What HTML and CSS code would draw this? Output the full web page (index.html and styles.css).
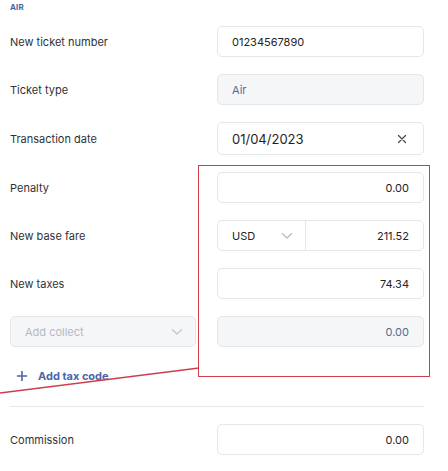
FILE: index.html
```html
<!DOCTYPE html>
<html>
<head>
<meta charset="utf-8">
<link rel="stylesheet" href="styles.css">
</head>
<body>
<div class="page">
  <div class="section-title">AIR</div>
  <div class="form">
    <div class="row">
      <div class="label">New ticket number</div>
      <div class="field"><span class="val">01234567890</span></div>
    </div>
    <div class="row">
      <div class="label">Ticket type</div>
      <div class="field disabled"><span class="val muted">Air</span></div>
    </div>
    <div class="row">
      <div class="label">Transaction date</div>
      <div class="field date"><span class="val big">01/04/2023</span>
        <svg class="clear" width="10" height="10" viewBox="0 0 10 10"><path d="M1.5 1.5 L8.5 8.5 M8.5 1.5 L1.5 8.5" stroke="#45474d" stroke-width="1.2" stroke-linecap="round"/></svg>
      </div>
    </div>
    <div class="row">
      <div class="label">Penalty</div>
      <div class="field right"><span class="val">0.00</span></div>
    </div>
    <div class="row">
      <div class="label">New base fare</div>
      <div class="field group">
        <div class="cur"><span class="val">USD</span>
          <svg class="chev" width="12" height="8" viewBox="0 0 12 8"><path d="M1.5 1.8 L6 6 L10.5 1.8" fill="none" stroke="#b9bdc6" stroke-width="1.4" stroke-linecap="round" stroke-linejoin="round"/></svg>
        </div>
        <div class="amt"><span class="val">211.52</span></div>
      </div>
    </div>
    <div class="row">
      <div class="label">New taxes</div>
      <div class="field right"><span class="val">74.34</span></div>
    </div>
    <div class="row">
      <div class="field disabled select-left"><span class="val placeholder">Add collect</span>
        <svg class="chev" width="12" height="8" viewBox="0 0 12 8"><path d="M1.5 1.8 L6 6 L10.5 1.8" fill="none" stroke="#c3c7cf" stroke-width="1.4" stroke-linecap="round" stroke-linejoin="round"/></svg>
      </div>
      <div class="field disabled right"><span class="val muted">0.00</span></div>
    </div>
  </div>
  <div class="add-tax">
    <svg width="12" height="12" viewBox="0 0 12 12"><path d="M6 1.5 V10.5 M1.5 6 H10.5" stroke="#4c64a8" stroke-width="1.6" stroke-linecap="round"/></svg>
    <span>Add tax code</span>
  </div>
  <div class="divider"></div>
  <div class="row">
    <div class="label">Commission</div>
    <div class="field right"><span class="val">0.00</span></div>
  </div>

  <div class="annot-box"></div>
  <svg class="annot-line" width="200" height="30" viewBox="0 0 200 30"><line x1="0" y1="27" x2="199" y2="2" stroke="#cf3e4b" stroke-width="1.6"/></svg>
</div>
</body>
</html>
```

FILE: styles.css
```css
html, body {
  margin: 0;
  padding: 0;
  background: #ffffff;
}
body {
  font-family: Inter, "Noto Sans", sans-serif;
  color: #2b2d33;
  width: 448px;
  height: 471px;
  overflow: hidden;
}
.page {
  position: relative;
  padding: 3px 24px 0 10px;
}
.section-title {
  font-size: 8px;
  font-weight: 700;
  color: #4c64a8;
  line-height: 8px;
  height: 8px;
  letter-spacing: 0.1px;
}
.form {
  margin-top: 15px;
  display: flex;
  flex-direction: column;
  gap: 17px;
}
.row {
  display: grid;
  grid-template-columns: 1fr 207px;
  align-items: center;
  column-gap: 21px;
}
.label {
  font-size: 11px;
  color: #303238;
}
.field {
  box-sizing: border-box;
  height: 31px;
  border: 1px solid #e4e6ea;
  border-radius: 5px;
  background: #fff;
  display: flex;
  align-items: center;
  padding: 0 14px;
}
.field.date {
  height: 33px;
  justify-content: space-between;
  padding-right: 16px;
}
.field.right {
  justify-content: flex-end;
}
.field.disabled {
  background: #f5f6f8;
}
.val {
  font-size: 11px;
  color: #222428;
}
.val.big {
  font-size: 13px;
}
.val.muted {
  color: #5a6992;
}
.val.placeholder {
  color: #b4b9c3;
}
.field.group {
  padding: 0;
}
.cur {
  width: 88px;
  height: 100%;
  box-sizing: border-box;
  border-right: 1px solid #e4e6ea;
  display: flex;
  align-items: center;
  justify-content: space-between;
  padding: 0 12px 0 14px;
}
.amt {
  flex: 1;
  display: flex;
  justify-content: flex-end;
  padding-right: 14px;
}
.select-left {
  justify-content: space-between;
  padding-right: 12px;
}
.add-tax {
  display: flex;
  align-items: center;
  gap: 10px;
  margin-top: 22px;
  padding-left: 6px;
  height: 14px;
  font-size: 11px;
  font-weight: 700;
  color: #4c64a8;
}
.divider {
  height: 1px;
  background: #e6e8eb;
  margin-top: 23px;
  margin-bottom: 17px;
}
.annot-box {
  position: absolute;
  left: 198px;
  top: 165px;
  width: 232px;
  height: 212px;
  box-sizing: border-box;
  border: 1.5px solid #cf3e4b;
}
.annot-line {
  position: absolute;
  left: 0;
  top: 366px;
}
```
